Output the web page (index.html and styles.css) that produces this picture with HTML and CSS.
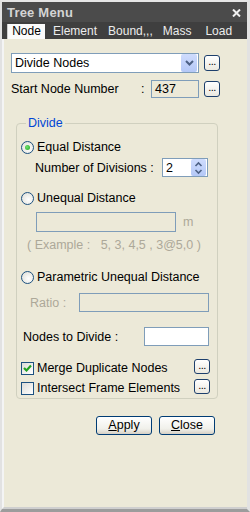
FILE: index.html
```html
<!DOCTYPE html>
<html>
<head>
<meta charset="utf-8">
<link rel="stylesheet" href="styles.css">
</head>
<body>
<div class="win">
  <div class="title">
    <span class="title-text">Tree Menu</span>
    <svg class="close-x" width="9" height="8" viewBox="0 0 9 8"><path d="M1 0.5 L8 7.5 M8 0.5 L1 7.5" stroke="#f0f0f0" stroke-width="2"/></svg>
  </div>
  <div class="tabs">
    <span class="tab active">Node</span>
    <span class="tab t2">Element</span>
    <span class="tab t3">Bound,,,</span>
    <span class="tab t4">Mass</span>
    <span class="tab t5">Load</span>
  </div>
  <div class="content">
    <div class="row r-drop">
      <div class="select">
        <span class="select-text">Divide Nodes</span>
        <span class="select-arrow"><svg width="9" height="6" viewBox="0 0 9 6"><path d="M1 1 L4.5 4.5 L8 1" stroke="#4d6185" stroke-width="2" fill="none"/></svg></span>
      </div>
      <span class="dots">...</span>
    </div>
    <div class="row r-start">
      <span class="lbl-start">Start Node Number</span>
      <span class="colon">:</span>
      <span class="input ro">437</span>
      <span class="dots">...</span>
    </div>
    <fieldset class="group">
      <legend>Divide</legend>
      <div class="grow g1"><span class="radio checked"></span><span>Equal Distance</span></div>
      <div class="grow g2"><span class="lbl-div">Number of Divisions :</span>
        <span class="spin"><span class="spin-val">2</span><span class="spin-btn"><svg width="9" height="14" viewBox="0 0 9 14"><path d="M1.5 5 L4.5 2 L7.5 5 M1.5 9 L4.5 12 L7.5 9" stroke="#4d6185" stroke-width="1.6" fill="none"/></svg></span></span>
      </div>
      <div class="grow g3"><span class="radio"></span><span>Unequal Distance</span></div>
      <div class="grow g4"><span class="input dis wide"></span><span class="unit">m</span></div>
      <div class="grow g5 disabled">( Example :&nbsp;&nbsp; 5, 3, 4,5 , 3@5,0 )</div>
      <div class="grow g6"><span class="radio"></span><span>Parametric Unequal Distance</span></div>
      <div class="grow g7"><span class="lbl-ratio disabled">Ratio :</span><span class="input dis ratio"></span></div>
      <div class="grow g8"><span class="lbl-nodes">Nodes to Divide :</span><span class="input white nodes"></span></div>
      <div class="grow g9"><span class="check checked"><svg width="11" height="11" viewBox="0 0 11 11"><path d="M2 5 L4.5 7.5 L9 2.5" stroke="#21a121" stroke-width="2.2" fill="none"/></svg></span><span class="ck-lbl">Merge Duplicate Nodes</span><span class="dots small">...</span></div>
      <div class="grow g10"><span class="check"></span><span class="ck-lbl">Intersect Frame Elements</span><span class="dots small">...</span></div>
    </fieldset>
    <div class="actions">
      <span class="btn"><u>A</u>pply</span>
      <span class="btn"><u>C</u>lose</span>
    </div>
  </div>
</div>
</body>
</html>
```
FILE: styles.css
```css
* { box-sizing: border-box; }
html, body { margin: 0; padding: 0; }
body {
  width: 250px; height: 512px; overflow: hidden;
  font-family: "Liberation Sans", Arial, sans-serif;
  font-size: 12.5px; color: #000;
  background: #d8d8d8;
}
.win {
  width: 250px; height: 512px;
  display: flex; flex-direction: column;
  border-top: 2px solid #e6e6e6;
  border-left: 2px solid #e2e2e2;
  border-right: 3px solid #e2e2e2;
  border-bottom: 3px solid #9c9c9c;
  background: #4a4a4a;
}
.title {
  height: 20px; flex: none;
  display: flex; align-items: center; justify-content: space-between;
  padding: 0 6px 0 5px;
  background: #4b4b4b;
}
.title-text { font-weight: bold; font-size: 13px; color: #d4d4d4; letter-spacing: 0.2px; }
.close-x { margin-top: 1px; }
.tabs {
  height: 17px; flex: none;
  display: flex; align-items: flex-end;
  background: #3f3f3f;
  padding-left: 5px;
  font-size: 12px;
}
.tab {
  height: 15px; line-height: 15px;
  color: #ececec; white-space: nowrap;
}
.t2 { margin-left: 8px; }
.t3 { margin-left: 11px; }
.t4 { margin-left: 10px; }
.t5 { margin-left: 14px; }
.tab.active {
  background: #fbfbfb; color: #000;
  border-left: 1px solid #cfcfcf;
  width: 38px; text-align: center;
}
.content {
  flex: 1;
  background: #ece9d8;
  border-left: 2px solid #f4f4f4;
  border-bottom: 2px solid #cfcfcf;
  padding: 14px 0 0 7px;
  display: flex; flex-direction: column;
}
.row { display: flex; align-items: center; }
.r-drop { height: 20px; }
.select {
  width: 188px; height: 20px;
  border: 1px solid #7f9db9; background: #fff;
  display: flex; align-items: center; justify-content: space-between;
  padding-left: 3px;
}
.select-arrow {
  width: 16px; height: 18px; margin-right: 1px;
  background: linear-gradient(#cfdcfd, #b4c8f7);
  border-radius: 2px;
  display: flex; align-items: center; justify-content: center;
}
.dots {
  width: 16px; height: 16px; margin-left: 5px;
  border: 1px solid #1d3f6c; border-radius: 3px;
  background: linear-gradient(#ffffff, #ece9e0);
  font-size: 11px; line-height: 10px; text-align: center;
  letter-spacing: -0.5px;
}
.r-start { height: 18px; margin-top: 7px; }
.lbl-start { width: 130px; }
.colon { width: 10px; }
.input {
  border: 1px solid #7f9db9; height: 18px; line-height: 16px;
  padding-left: 3px;
}
.ro { width: 48px; background: #ece9d8; }
.group {
  margin: 18px 0 0 5px; width: 202px;
  border: 1px solid #d0d0bf; border-radius: 4px;
  padding: 0 0 3px 4px;
}
.group legend {
  color: #0046d5; padding: 0 2px; margin-left: 5px;
  line-height: 15px;
}
.grow { display: flex; align-items: center; }
.radio {
  width: 13px; height: 13px; border-radius: 50%;
  border: 1px solid #1c5180;
  background: radial-gradient(circle at 60% 60%, #ffffff, #dcdcd4);
  margin-right: 3px; flex: none; position: relative;
}
.radio.checked::after {
  content: ""; position: absolute; left: 3px; top: 3px;
  width: 5px; height: 5px; border-radius: 50%;
  background: radial-gradient(circle at 40% 40%, #6fe36f, #21a121);
}
.g1 { height: 14px; margin-top: 9px; }
.g2 { height: 19px; margin-top: 4px; padding-left: 14px; }
.lbl-div { width: 127px; }
.spin {
  width: 46px; height: 19px; border: 1px solid #7f9db9; background: #fff;
  display: flex; justify-content: space-between; align-items: center;
  padding-left: 3px;
}
.spin-btn {
  width: 15px; height: 17px; margin-right: 1px;
  background: linear-gradient(#cfdcfd, #b4c8f7); border-radius: 2px;
  display: flex; align-items: center; justify-content: center;
}
.g3 { height: 14px; margin-top: 14px; }
.g4 { height: 20px; margin-top: 7px; padding-left: 15px; }
.wide { width: 140px; height: 20px; }
.unit { color: #aca899; margin-left: 7px; }
.g5 { height: 14px; margin-top: 6px; padding-left: 6px; }
.disabled { color: #aca899; }
.g6 { height: 14px; margin-top: 18px; }
.g7 { height: 19px; margin-top: 9px; padding-left: 9px; }
.lbl-ratio { width: 49px; }
.ratio { width: 130px; height: 19px; }
.dis { background: #ece9d8; }
.g8 { height: 19px; margin-top: 15px; padding-left: 2px; }
.lbl-nodes { width: 121px; }
.nodes { width: 65px; height: 19px; background: #fff; }
.g9 { height: 17px; margin-top: 12px; }
.g10 { height: 17px; margin-top: 3px; }
.check {
  width: 13px; height: 13px; border: 1px solid #1c5180;
  background: linear-gradient(135deg, #dcdcd7, #ffffff);
  margin-right: 3px; flex: none; margin-top: 3px;
  display: flex; align-items: center; justify-content: center;
}
.ck-lbl { width: 157px; margin-top: 3px; }
.dots.small { margin-left: 0; height: 15px; }
.actions {
  display: flex; margin-top: 17px; padding-left: 85px;
}
.btn {
  width: 56px; height: 19px; margin-right: 7px;
  border: 1px solid #003c74; border-radius: 3px;
  background: linear-gradient(#ffffff, #f0f0ea 70%, #d6d0c5);
  text-align: center; line-height: 17px;
}
```
